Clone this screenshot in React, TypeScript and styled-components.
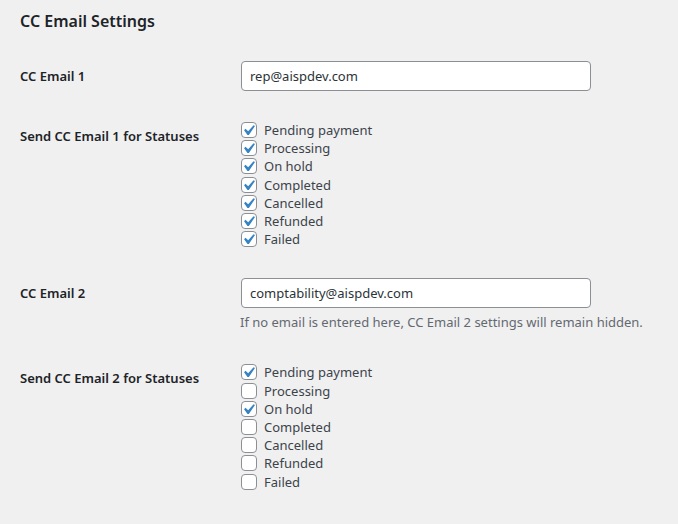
import React from "react";
import styled, { createGlobalStyle } from "styled-components";

const GlobalStyle = createGlobalStyle`
  html, body {
    margin: 0;
    padding: 0;
    background: #f0f0f1;
  }
  body {
    font-family: "Noto Sans", "Open Sans", sans-serif;
    font-size: 13px;
    color: #3c434a;
  }
`;

const Wrap = styled.div`
  padding: 10px 20px 0;
`;

const Heading = styled.h2`
  margin: 0 0 14px;
  font-size: 16px;
  line-height: 22px;
  font-weight: 600;
  color: #1d2327;
`;

const FormTable = styled.div`
  display: grid;
  grid-template-columns: 210px 1fr;
`;

const Label = styled.div`
  padding: 21px 10px 19px 0;
  font-size: 13px;
  line-height: 18px;
  font-weight: 600;
  color: #1d2327;
`;

const Field = styled.div`
  padding: 15px 10px;
`;

const TextInput = styled.input`
  box-sizing: border-box;
  display: block;
  width: 350px;
  height: 30px;
  margin: 0 0 0 1px;
  padding: 0 8px;
  border: 1px solid #8c8f94;
  border-radius: 4px;
  background: #fff;
  font-family: inherit;
  font-size: 13px;
  color: #2c3338;
  outline: none;
`;

const Description = styled.p`
  margin: 4px 0 0;
  font-size: 13px;
  line-height: 21px;
  color: #646970;
`;

const StatusList = styled.div`
  display: flex;
  flex-direction: column;
`;

const StatusRow = styled.label`
  display: flex;
  align-items: center;
  height: 18.2px;
  font-size: 13px;
  color: #3c434a;
`;

const Box = styled.span`
  box-sizing: border-box;
  display: inline-flex;
  width: 16px;
  height: 16px;
  margin: 0 7px 0 1px;
  border: 1px solid #8c8f94;
  border-radius: 4px;
  background: #fff;
  flex-shrink: 0;
`;

const Check = styled.svg`
  width: 14px;
  height: 14px;
  display: block;
`;

const statuses = [
  "Pending payment",
  "Processing",
  "On hold",
  "Completed",
  "Cancelled",
  "Refunded",
  "Failed",
];

const Checkbox: React.FC<{ checked: boolean }> = ({ checked }) => (
  <Box>
    {checked && (
      <Check viewBox="3.81 2.86 13.33 13.33">
        <path
          d="M14.83 4.89l1.34.94-5.81 8.38H9.02L5.78 9.67l1.34-1.25 2.57 2.4z"
          fill="#3582c4"
        />
      </Check>
    )}
  </Box>
);

const StatusChecks: React.FC<{ selected: string[] }> = ({ selected }) => (
  <StatusList>
    {statuses.map(s => (
      <StatusRow key={s}>
        <Checkbox checked={selected.includes(s)} />
        {s}
      </StatusRow>
    ))}
  </StatusList>
);

const App: React.FC = () => (
  <Wrap>
    <GlobalStyle />
    <Heading>CC Email Settings</Heading>
    <FormTable>
      <Label>CC Email 1</Label>
      <Field>
        <TextInput defaultValue="rep@aispdev.com" />
      </Field>

      <Label>Send CC Email 1 for Statuses</Label>
      <Field>
        <StatusChecks selected={statuses} />
      </Field>

      <Label>CC Email 2</Label>
      <Field>
        <TextInput defaultValue="comptability@aispdev.com" />
        <Description>
          If no email is entered here, CC Email 2 settings will remain hidden.
        </Description>
      </Field>

      <Label>Send CC Email 2 for Statuses</Label>
      <Field>
        <StatusChecks selected={["Pending payment", "On hold"]} />
      </Field>
    </FormTable>
  </Wrap>
);

export default App;
